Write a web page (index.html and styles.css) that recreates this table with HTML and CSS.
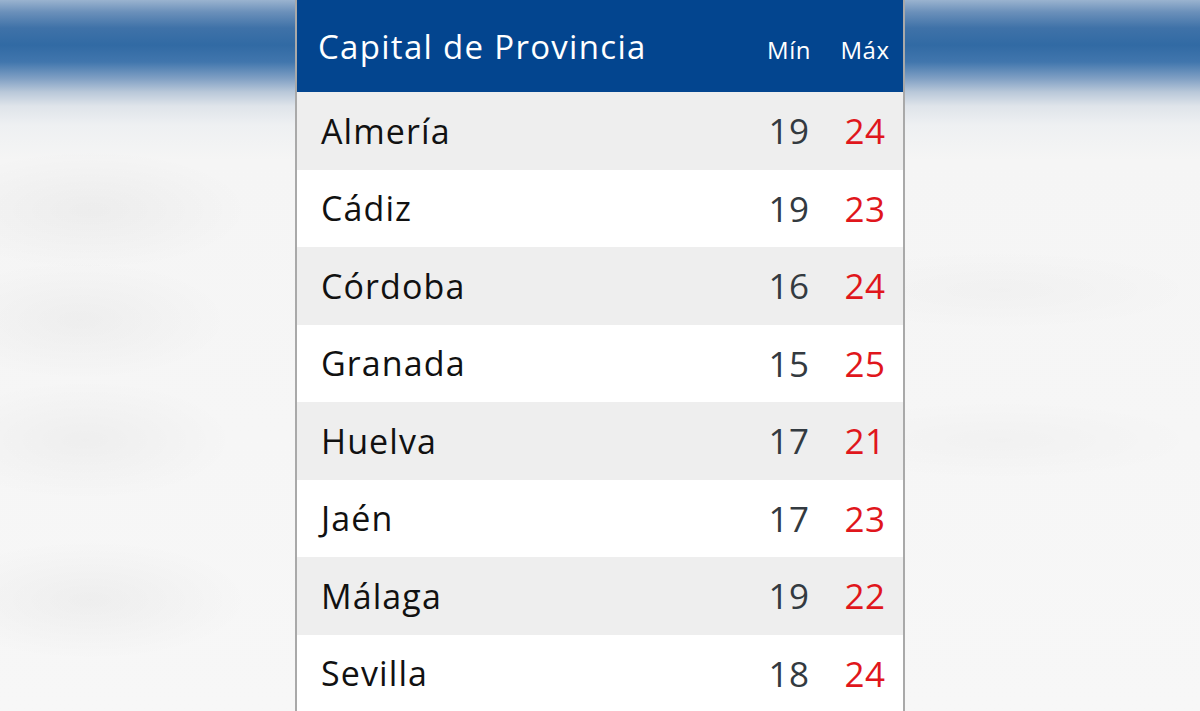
FILE: index.html
```html
<!DOCTYPE html>
<html lang="es">
<head>
<meta charset="utf-8">
<title>Temperaturas</title>
<link rel="stylesheet" href="styles.css">
</head>
<body>
<main class="page">
  <section class="table">
    <div class="row head">
      <div class="name">Capital de Provincia</div>
      <div class="col">Mín</div>
      <div class="col">Máx</div>
    </div>
    <div class="row alt"><div class="name">Almería</div><div class="min">19</div><div class="max">24</div></div>
    <div class="row"><div class="name">Cádiz</div><div class="min">19</div><div class="max">23</div></div>
    <div class="row alt"><div class="name">Córdoba</div><div class="min">16</div><div class="max">24</div></div>
    <div class="row"><div class="name">Granada</div><div class="min">15</div><div class="max">25</div></div>
    <div class="row alt"><div class="name">Huelva</div><div class="min">17</div><div class="max">21</div></div>
    <div class="row"><div class="name">Jaén</div><div class="min">17</div><div class="max">23</div></div>
    <div class="row alt"><div class="name">Málaga</div><div class="min">19</div><div class="max">22</div></div>
    <div class="row"><div class="name">Sevilla</div><div class="min">18</div><div class="max">24</div></div>
  </section>
</main>
</body>
</html>
```

FILE: styles.css
```css
html, body {
  margin: 0;
  padding: 0;
  height: 100%;
  overflow: hidden;
}
body {
  font-family: "Open Sans", "Noto Sans", sans-serif;
  background:
    radial-gradient(ellipse 160px 60px at 90px 210px, rgba(0,0,0,0.035), rgba(0,0,0,0) 100%),
    radial-gradient(ellipse 150px 60px at 80px 320px, rgba(0,0,0,0.03), rgba(0,0,0,0) 100%),
    radial-gradient(ellipse 150px 60px at 85px 440px, rgba(0,0,0,0.03), rgba(0,0,0,0) 100%),
    radial-gradient(ellipse 160px 60px at 90px 600px, rgba(0,0,0,0.035), rgba(0,0,0,0) 100%),
    radial-gradient(ellipse 200px 40px at 1000px 290px, rgba(0,0,0,0.02), rgba(0,0,0,0) 100%),
    radial-gradient(ellipse 200px 40px at 1000px 440px, rgba(0,0,0,0.02), rgba(0,0,0,0) 100%),
    linear-gradient(to bottom,
      #9ab3cf 0px,
      #6b90ba 12px,
      #3f72a8 28px,
      #316aa4 45px,
      #4176ad 62px,
      #7e9ec3 78px,
      #b9c8d9 92px,
      #dfe4ea 106px,
      #eef0f2 125px,
      #f5f5f5 160px,
      #f7f7f7 100%);
}
.page {
  display: flex;
  justify-content: center;
  height: 100%;
}
.table {
  width: 606px;
  border-left: 2px solid #a9a9a9;
  border-right: 2px solid #a9a9a9;
  background: #fff;
  display: flex;
  flex-direction: column;
}
.row {
  display: grid;
  grid-template-columns: 1fr 76px 76px;
  align-items: center;
  height: 77.5px;
  flex: none;
  font-size: 34px;
  color: #111;
  background: #fff;
}
.row.alt {
  background: #eeeeee;
}
.row.head {
  height: 92px;
  background: #03458f;
  color: #fff;
  align-items: baseline;
  padding-top: 24px;
  box-sizing: border-box;
  align-content: start;
}
.head .name {
  font-size: 33px;
  letter-spacing: 1.3px;
  padding-left: 21px;
}
.head .col {
  font-size: 24px;
  letter-spacing: 0.5px;
  text-align: center;
}
.name {
  padding-left: 24px;
  letter-spacing: 1.1px;
}
.min, .max {
  text-align: center;
  font-size: 35px;
  letter-spacing: 0.5px;
}
.min {
  color: #333a40;
}
.max {
  color: #e0161c;
}
```
